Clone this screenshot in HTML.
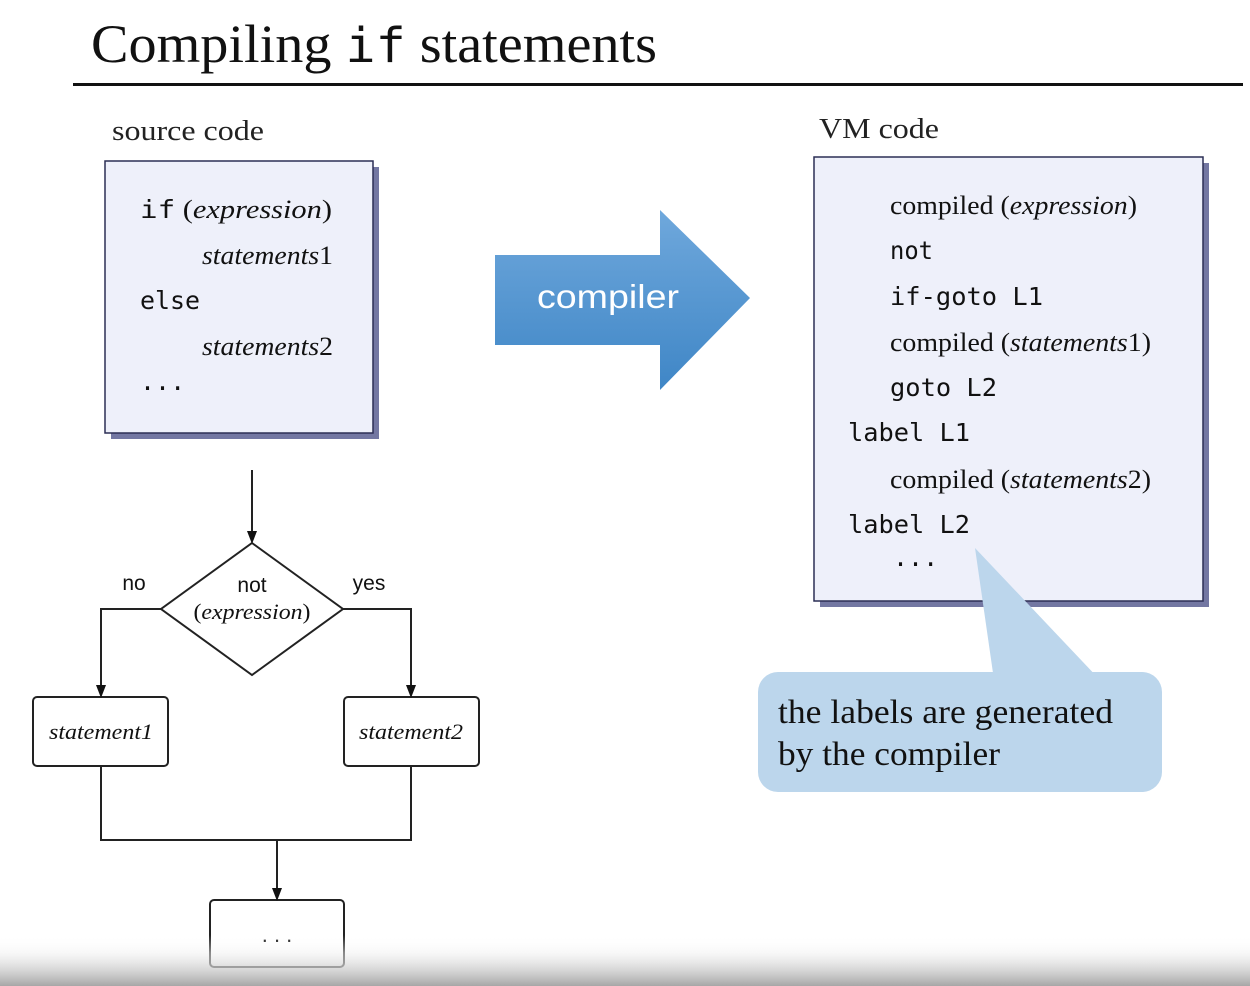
<!DOCTYPE html>
<html><head><meta charset="utf-8"><style>
html,body{margin:0;padding:0;background:#fff;width:1250px;height:986px;overflow:hidden}
svg{display:block}
.serif{font-family:"Liberation Serif",serif}
.mono{font-family:"DejaVu Sans Mono","Liberation Mono",monospace}
.sans{font-family:"Liberation Sans",sans-serif}
</style></head><body>
<svg width="1250" height="986" viewBox="0 0 1250 986" xmlns="http://www.w3.org/2000/svg">
<defs>
<linearGradient id="ag" x1="0" y1="0" x2="0" y2="1"><stop offset="0" stop-color="#6fa8dc"/><stop offset="1" stop-color="#3f86c6"/></linearGradient>
<linearGradient id="bg" x1="0" y1="0" x2="0" y2="1"><stop offset="0" stop-color="#fff" stop-opacity="0"/><stop offset="0.35" stop-color="#f0f0f0" stop-opacity="0.5"/><stop offset="1" stop-color="#a6a6a6"/></linearGradient>
</defs>
<text x="91" y="62" class="serif" font-size="54" fill="#111" textLength="566" lengthAdjust="spacingAndGlyphs">Compiling <tspan class="mono" font-size="48">if</tspan> statements</text>
<rect x="73" y="83" width="1170" height="3" fill="#111"/>

<text x="112" y="140" class="serif" font-size="29" fill="#222" textLength="152" lengthAdjust="spacingAndGlyphs">source code</text>
<rect x="111" y="167" width="268" height="272" fill="#5a5f92" opacity="0.85"/>
<rect x="105" y="161" width="268" height="272" fill="#eef0fa" stroke="#2c2f55" stroke-width="1.5"/>
<g font-size="26" fill="#111">
<text x="140" y="218" textLength="192" lengthAdjust="spacingAndGlyphs"><tspan class="mono" font-size="25">if</tspan><tspan class="serif"> (<tspan font-style="italic">expression</tspan>)</tspan></text>
<text x="202" y="264" class="serif" textLength="131" lengthAdjust="spacingAndGlyphs"><tspan font-style="italic">statements</tspan>1</text>
<text x="140" y="309" class="mono" font-size="25" textLength="60" lengthAdjust="spacingAndGlyphs">else</text>
<text x="202" y="355" class="serif" textLength="131" lengthAdjust="spacingAndGlyphs"><tspan font-style="italic">statements</tspan>2</text>
<text x="140" y="390" class="mono" font-size="25">...</text>
</g>

<path d="M495,255 L660,255 L660,210 L750,298 L660,390 L660,345 L495,345 Z" fill="url(#ag)"/>
<text x="608" y="308" text-anchor="middle" class="sans" font-size="33" fill="#fff" textLength="142" lengthAdjust="spacingAndGlyphs">compiler</text>

<text x="819" y="138" class="serif" font-size="29" fill="#222" textLength="120" lengthAdjust="spacingAndGlyphs">VM code</text>
<rect x="820" y="163" width="389" height="444" fill="#5a5f92" opacity="0.85"/>
<rect x="814" y="157" width="389" height="444" fill="#eef0fa" stroke="#2c2f55" stroke-width="1.5"/>
<g font-size="26" fill="#111">
<text x="890" y="214" class="serif" textLength="247" lengthAdjust="spacingAndGlyphs">compiled (<tspan font-style="italic">expression</tspan>)</text>
<text x="890" y="259" class="mono" font-size="25" textLength="43" lengthAdjust="spacingAndGlyphs">not</text>
<text x="890" y="305" class="mono" font-size="25" textLength="153" lengthAdjust="spacingAndGlyphs">if-goto L1</text>
<text x="890" y="351" class="serif" textLength="261" lengthAdjust="spacingAndGlyphs">compiled (<tspan font-style="italic">statements</tspan>1)</text>
<text x="890" y="396" class="mono" font-size="25" textLength="107" lengthAdjust="spacingAndGlyphs">goto L2</text>
<text x="848" y="441" class="mono" font-size="25" textLength="122" lengthAdjust="spacingAndGlyphs">label L1</text>
<text x="890" y="488" class="serif" textLength="261" lengthAdjust="spacingAndGlyphs">compiled (<tspan font-style="italic">statements</tspan>2)</text>
<text x="848" y="533" class="mono" font-size="25" textLength="122" lengthAdjust="spacingAndGlyphs">label L2</text>
<text x="893" y="566" class="mono" font-size="25">...</text>
</g>

<path d="M975,548 L994,680 L1100,680 Z" fill="#bcd6ec"/>
<rect x="758" y="672" width="404" height="120" rx="20" fill="#bcd6ec"/>
<text x="778" y="723" class="serif" font-size="34" fill="#111" textLength="335" lengthAdjust="spacingAndGlyphs">the labels are generated</text>
<text x="778" y="765" class="serif" font-size="34" fill="#111" textLength="222" lengthAdjust="spacingAndGlyphs">by the compiler</text>

<g stroke="#222" stroke-width="2" fill="none">
<line x1="252" y1="470" x2="252" y2="533"/>
<path d="M252,543 L343,609 L252,675 L161,609 Z" fill="#fff"/>
<path d="M161,609 L101,609 L101,687"/>
<path d="M343,609 L411,609 L411,687"/>
<rect x="33" y="697" width="135" height="69" rx="4" fill="#fff"/>
<rect x="344" y="697" width="135" height="69" rx="4" fill="#fff"/>
<path d="M101,766 L101,840 L411,840 L411,766"/>
<line x1="277" y1="840" x2="277" y2="890"/>
<rect x="210" y="900" width="134" height="67" rx="4" fill="#fff"/>
</g>
<g fill="#111">
<path d="M247,531 L257,531 L252,544 Z"/>
<path d="M96,685 L106,685 L101,698 Z"/>
<path d="M406,685 L416,685 L411,698 Z"/>
<path d="M272,888 L282,888 L277,901 Z"/>
</g>
<g fill="#111">
<text x="134" y="590" text-anchor="middle" class="sans" font-size="21">no</text>
<text x="369" y="590" text-anchor="middle" class="sans" font-size="21">yes</text>
<text x="252" y="592" text-anchor="middle" class="sans" font-size="21">not</text>
<text x="252" y="619" text-anchor="middle" class="serif" font-size="22" textLength="117" lengthAdjust="spacingAndGlyphs">(<tspan font-style="italic">expression</tspan>)</text>
<text x="101" y="739" text-anchor="middle" class="serif" font-style="italic" font-size="22" textLength="104" lengthAdjust="spacingAndGlyphs">statement1</text>
<text x="411" y="739" text-anchor="middle" class="serif" font-style="italic" font-size="22" textLength="104" lengthAdjust="spacingAndGlyphs">statement2</text>
<text x="277" y="942" text-anchor="middle" class="sans" font-size="22">. . .</text>
</g>
<rect x="0" y="935" width="1250" height="51" fill="url(#bg)"/>
</svg>
</body></html>
